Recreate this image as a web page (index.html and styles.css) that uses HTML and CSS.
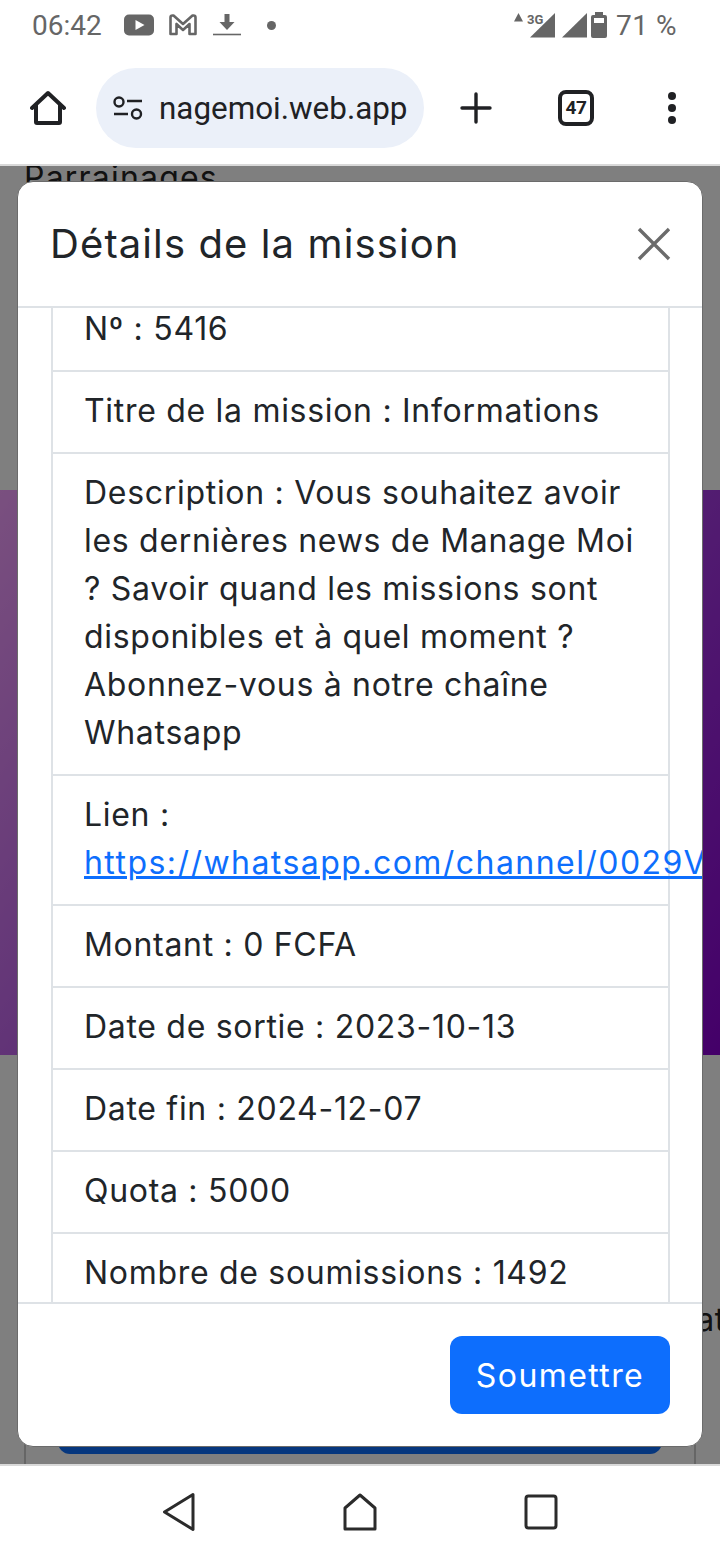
FILE: index.html
```html
<!DOCTYPE html>
<html lang="fr">
<head>
<meta charset="utf-8">
<title>Détails de la mission</title>
<link rel="stylesheet" href="styles.css">
</head>
<body>
<div class="phone">
  <header class="status">
    <div class="status-left">
      <span class="clock">06:42</span>
      <svg class="ic-yt" width="30" height="22" viewBox="0 0 30 22"><rect width="30" height="21" y="0.5" rx="5" fill="#666"/><path d="M11.500 6v10l9-5z" fill="#fff"/></svg>
      <svg class="ic-gm" width="28" height="22" viewBox="0 0 28 22"><path d="M1.500 20V3.500Q1.500 1.500 3.500 1.500h1L14 10l9.500-8.500h1q2 0 2 2V20h-6V10L14 16 7.500 10V20z" fill="none" stroke="#666" stroke-width="2.600" stroke-linejoin="round"/></svg>
      <svg class="ic-dl" width="28" height="22" viewBox="0 0 28 22"><path d="M11.500 0h5v8h5L14 16 6.500 8h5z" fill="#666"/><path d="M0 20.500h28" stroke="#666" stroke-width="1.600"/></svg>
      <span class="dot"></span>
    </div>
    <div class="status-right">
      <svg width="94" height="26" viewBox="0 0 94 26"><path d="M0 9.500L4.500 1 9 9.500z" fill="#666"/><text x="13" y="12" class="net">3G</text><path d="M16 25.500L41 1v24.500z" fill="#666"/><path d="M48 25.500L73 1v24.500z" fill="#666"/><path d="M77 5q0-2 2-2h2V0h8v3h2q2 0 2 2v19q0 2-2 2H79q-2 0-2-2z" fill="#666"/><rect x="80" y="6" width="10" height="5" fill="#fff"/></svg>
      <span class="battery">71 %</span>
    </div>
  </header>

  <nav class="toolbar">
    <svg class="tool-home" width="36" height="36" viewBox="0 0 36 36"><path d="M2 18L18 3l16 15M6 15v17q0 1 1 1h22q1 0 1-1V15" fill="none" stroke="#202124" stroke-width="4" stroke-linejoin="round" stroke-linecap="round"/></svg>
    <div class="omnibox">
      <svg width="30" height="24" viewBox="0 0 30 24"><circle cx="6" cy="6" r="4.500" fill="none" stroke="#202124" stroke-width="2.400"/><path d="M14 5h15M1 18h14" stroke="#202124" stroke-width="2.600"/><circle cx="23.500" cy="18" r="4.500" fill="none" stroke="#202124" stroke-width="2.400"/></svg>
      <span class="url">nagemoi.web.app</span>
    </div>
    <svg class="tool-plus" width="32" height="32" viewBox="0 0 32 32"><path d="M16 2v28M2 16h28" stroke="#202124" stroke-width="3.400" stroke-linecap="round"/></svg>
    <div class="tabs">47</div>
    <div class="kebab"><i></i><i></i><i></i></div>
  </nav>

  <main class="viewport">
    <div class="page">
      <h2 class="page-title">Parrainages</h2>
      <section class="hero"></section>
      <div class="page-tail">
        <span class="tail-text">Résultat</span>
        <div class="panel"><div class="panel-btn"></div></div>
      </div>
    </div>
    <div class="backdrop"></div>

    <div class="modal">
      <div class="modal-header">
        <h1 class="modal-title">Détails de la mission</h1>
        <svg class="close" width="34" height="34" viewBox="0 0 34 34"><path d="M2 2l30 30M32 2L2 32" stroke="#6b6b6b" stroke-width="3.400"/></svg>
      </div>
      <div class="modal-body">
        <ul class="list">
          <li>Nº : 5416</li>
          <li>Titre de la mission : Informations</li>
          <li>Description : Vous souhaitez avoir les dernières news de Manage Moi ? Savoir quand les missions sont disponibles et à quel moment ? Abonnez-vous à notre chaîne Whatsapp</li>
          <li>Lien :<br><a class="link" href="#">https://whatsapp.com/channel/0029VaAbCdEfGhIjKlMnOp</a></li>
          <li>Montant : 0 FCFA</li>
          <li>Date de sortie : 2023-10-13</li>
          <li>Date fin : 2024-12-07</li>
          <li>Quota : 5000</li>
          <li>Nombre de soumissions : 1492</li>
          <li>Statut : En cours</li>
        </ul>
      </div>
      <div class="modal-footer">
        <button class="submit" type="button">Soumettre</button>
      </div>
    </div>
  </main>

  <footer class="navbar">
    <svg width="34" height="40" viewBox="0 0 34 40"><path d="M31 2.500L2.500 20 31 37.500z" fill="none" stroke="#2b2b2b" stroke-width="3" stroke-linejoin="round"/></svg>
    <svg width="34" height="38" viewBox="0 0 34 38"><path d="M17 2L32 15v21H2V15z" fill="none" stroke="#2b2b2b" stroke-width="3" stroke-linejoin="round"/></svg>
    <svg width="34" height="36" viewBox="0 0 34 36"><rect x="2" y="2" width="30" height="32" rx="2.500" fill="none" stroke="#2b2b2b" stroke-width="3"/></svg>
  </footer>
</div>
</body>
</html>
```

FILE: styles.css
```css
* { box-sizing: border-box; }
html, body { margin: 0; padding: 0; background: #fff; }
.phone { width: 720px; height: 1560px; display: flex; flex-direction: column; overflow: hidden; font-family: Inter, "Liberation Sans", sans-serif; font-variant-ligatures: no-contextual; }

/* system status bar */
.status { height: 64px; flex: none; display: flex; justify-content: space-between; align-items: center; padding: 0 43px 14px 32px; color: #666; font-family: Roboto, sans-serif; }
.status-left { display: flex; align-items: center; }
.clock { font-size: 28px; margin-right: 22px; }
.ic-gm { margin-left: 15px; }
.ic-dl { margin-left: 16px; }
.dot { width: 9px; height: 9px; border-radius: 50%; background: #666; margin-left: 26px; }
.status-right { display: flex; align-items: center; gap: 8px; }
.battery { font-size: 28px; letter-spacing: 0.5px; }
.net { font: 700 13px Roboto, sans-serif; fill: #666; }

/* browser toolbar */
.toolbar { height: 102px; flex: none; display: flex; align-items: center; padding: 0 0 12px 30px; border-bottom: 2px solid #d9d9d9; }
.omnibox { width: 328px; height: 80px; margin-left: 30px; border-radius: 40px; background: #ebf0f9; display: flex; align-items: center; padding-left: 17px; overflow: hidden; }
.url { font: 31.400px Roboto, sans-serif; color: #202124; margin-left: 16px; white-space: nowrap; }
.tool-plus { margin-left: 36px; }
.tabs { width: 36px; height: 36px; margin-left: 66px; border: 4px solid #202124; border-radius: 8px; font: 700 19px/28px Roboto, sans-serif; letter-spacing: -0.5px; color: #202124; text-align: center; }
.kebab { margin-left: 74px; display: flex; flex-direction: column; gap: 4px; }
.kebab i { width: 8px; height: 8px; border-radius: 50%; background: #202124; display: block; }

/* page underneath the dialog */
.viewport { flex: 1; position: relative; overflow: hidden; }
.page { height: 100%; display: flex; flex-direction: column; }
.page-title { margin: 0; height: 324px; padding: 0 0 0 24px; font: 400 32px/24px Inter, sans-serif; letter-spacing: 1.200px; color: #222; }
.hero { height: 565px; flex: none; background: linear-gradient(125deg, #f4a0ff 0%, #b050e8 50%, #8800d2 100%); }
.page-tail { flex: 1; position: relative; }
.tail-text { position: absolute; right: -6px; top: 245px; font-size: 32px; letter-spacing: 0.7px; color: #222; }
.panel { position: absolute; left: 24px; right: 24px; top: 0; bottom: 0; border: 2px solid #ccc; border-width: 0 2px; }
.panel-btn { position: absolute; left: 32px; right: 32px; bottom: 10px; height: 30px; background: #0d6efd; border-radius: 0 0 12px 12px; }
.backdrop { position: absolute; inset: 0; background: rgba(0, 0, 0, 0.5); }

/* dialog */
.modal { position: absolute; left: 17px; top: 15px; width: 686px; height: 1266px; background: #fff; border: 1px solid #6b6b6b; border-radius: 16px; display: flex; flex-direction: column; overflow: hidden; color: #212529; }
.modal-header { height: 126px; flex: none; display: flex; align-items: center; justify-content: space-between; padding: 0 31px 0 32px; border-bottom: 2px solid #dee2e6; }
.modal-title { margin: 0; font-size: 40px; font-weight: 400; line-height: 60px; letter-spacing: 1.100px; }
.modal-body { flex: 1; min-height: 0; overflow: hidden; padding: 0 32px 0 33px; }
.list { list-style: none; margin: -18px 0 0; padding: 0; border: 2px solid #dee2e6; border-top: 0; width: 619px; }
.list li { padding: 15px 31px 17px; border-bottom: 2px solid #dee2e6; font-size: 32px; line-height: 48px; letter-spacing: 0.7px; }
.link { color: #0d6efd; text-decoration: underline; white-space: nowrap; letter-spacing: 1.450px; }
.modal-footer { height: 144px; flex: none; border-top: 2px solid #dee2e6; display: flex; justify-content: flex-end; align-items: center; padding: 0 32px; }
.submit { width: 220px; height: 78px; border: 0; border-radius: 12px; background: #0d6efd; color: #fff; font: 32px Inter, sans-serif; letter-spacing: 1.400px; }

/* system navigation */
.navbar { height: 96px; flex: none; border-top: 2px solid #d9d9d9; display: flex; align-items: center; justify-content: center; gap: 147px; background: #fff; padding: 0 0 2px; }
```
